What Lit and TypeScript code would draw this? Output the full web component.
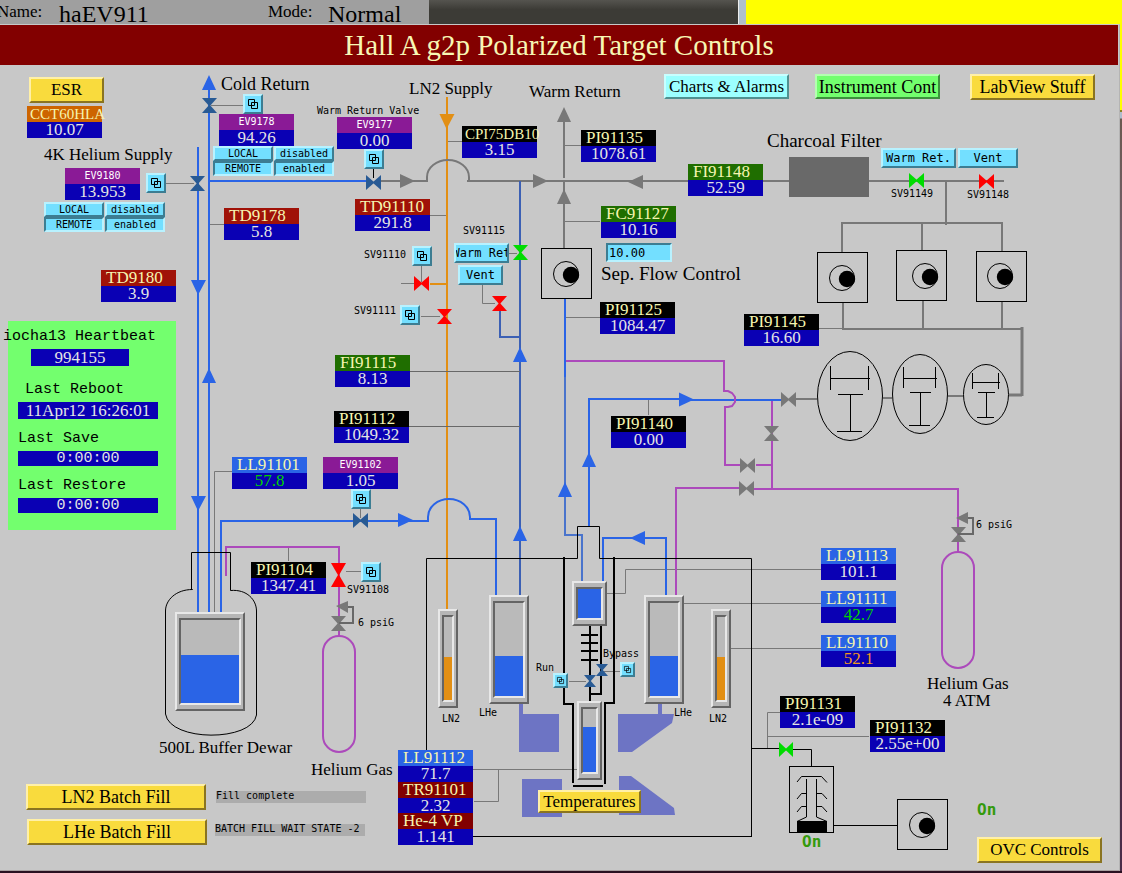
import { LitElement, html, svg, css } from "lit";
import { customElement, property } from "lit/decorators.js";
import { classMap } from "lit/directives/class-map.js";
import { styleMap } from "lit/directives/style-map.js";

const ORIGIN_Y = 65;
const at = (x: number, y: number, w?: number, h?: number) => {
  const s: Record<string, string> = { left: `${x}px`, top: `${y - ORIGIN_Y}px` };
  if (w) s.width = `${w}px`;
  if (h) s.height = `${h}px`;
  return styleMap(s);
};

type Kind = "pressure" | "flow" | "temp" | "valve" | "level" | "supply" | "deep";
interface Reading { x: number; y: number; kind: Kind; tag: string; value: string; tone?: string }

const READINGS: Reading[] = [
  { x: 27, y: 106, kind: "supply", tag: "CCT60HLA", value: "10.07" },
  { x: 65, y: 168, kind: "valve", tag: "EV9180", value: "13.953" },
  { x: 219, y: 114, kind: "valve", tag: "EV9178", value: "94.26" },
  { x: 337, y: 117, kind: "valve", tag: "EV9177", value: "0.00" },
  { x: 224, y: 208, kind: "temp", tag: "TD9178", value: "5.8" },
  { x: 101, y: 270, kind: "temp", tag: "TD9180", value: "3.9" },
  { x: 355, y: 199, kind: "temp", tag: "TD91110", value: "291.8" },
  { x: 462, y: 126, kind: "pressure", tag: "CPI75DB10", value: "3.15" },
  { x: 581, y: 130, kind: "pressure", tag: "PI91135", value: "1078.61" },
  { x: 688, y: 164, kind: "flow", tag: "FI91148", value: "52.59" },
  { x: 601, y: 206, kind: "flow", tag: "FC91127", value: "10.16" },
  { x: 600, y: 302, kind: "pressure", tag: "PI91125", value: "1084.47" },
  { x: 335, y: 355, kind: "flow", tag: "FI91115", value: "8.13" },
  { x: 334, y: 411, kind: "pressure", tag: "PI91112", value: "1049.32" },
  { x: 323, y: 457, kind: "valve", tag: "EV91102", value: "1.05" },
  { x: 232, y: 457, kind: "level", tag: "LL91101", value: "57.8", tone: "ok" },
  { x: 251, y: 562, kind: "pressure", tag: "PI91104", value: "1347.41" },
  { x: 611, y: 416, kind: "pressure", tag: "PI91140", value: "0.00" },
  { x: 744, y: 314, kind: "pressure", tag: "PI91145", value: "16.60" },
  { x: 821, y: 548, kind: "level", tag: "LL91113", value: "101.1" },
  { x: 821, y: 591, kind: "level", tag: "LL91111", value: "42.7", tone: "ok" },
  { x: 821, y: 635, kind: "level", tag: "LL91110", value: "52.1", tone: "warn" },
  { x: 780, y: 696, kind: "pressure", tag: "PI91131", value: "2.1e-09" },
  { x: 870, y: 720, kind: "pressure", tag: "PI91132", value: "2.55e+00" },
  { x: 398, y: 750, kind: "level", tag: "LL91112", value: "71.7" },
  { x: 398, y: 782, kind: "deep", tag: "TR91101", value: "2.32" },
  { x: 398, y: 813, kind: "deep", tag: "He-4 VP", value: "1.141" },
];

interface Caption { x: number; y: number; text: string; size: string }
const CAPTIONS: Caption[] = [
  { x: 221, y: 74, text: "Cold Return", size: "large" },
  { x: 409, y: 79, text: "LN2 Supply", size: "medium" },
  { x: 529, y: 82, text: "Warm Return", size: "medium" },
  { x: 44, y: 145, text: "4K Helium Supply", size: "medium" },
  { x: 767, y: 131, text: "Charcoal Filter", size: "wide" },
  { x: 601, y: 264, text: "Sep. Flow Control", size: "wide" },
  { x: 159, y: 738, text: "500L Buffer Dewar", size: "medium" },
  { x: 311, y: 760, text: "Helium Gas", size: "medium" },
  { x: 927, y: 674, text: "Helium Gas", size: "medium" },
  { x: 943, y: 691, text: "4 ATM", size: "medium" },
  { x: 317, y: 105, text: "Warm Return Valve", size: "small" },
  { x: 364, y: 249, text: "SV91110", size: "small" },
  { x: 354, y: 305, text: "SV91111", size: "small" },
  { x: 463, y: 225, text: "SV91115", size: "small" },
  { x: 891, y: 188, text: "SV91149", size: "small" },
  { x: 967, y: 189, text: "SV91148", size: "small" },
  { x: 347, y: 584, text: "SV91108", size: "small" },
  { x: 358, y: 617, text: "6 psiG", size: "small" },
  { x: 976, y: 519, text: "6 psiG", size: "small" },
  { x: 536, y: 662, text: "Run", size: "small" },
  { x: 603, y: 648, text: "Bypass", size: "small" },
  { x: 442, y: 713, text: "LN2", size: "small" },
  { x: 479, y: 707, text: "LHe", size: "small" },
  { x: 674, y: 707, text: "LHe", size: "small" },
  { x: 709, y: 713, text: "LN2", size: "small" },
  { x: 802, y: 832, text: "On", size: "state" },
  { x: 977, y: 800, text: "On", size: "state" },
];

const BUTTONS: [number, number, number, number, string, string][] = [
  [29, 77, 75, 26, "ESR", "gold snug"],
  [664, 74, 125, 25, "Charts & Alarms", "aqua"],
  [815, 74, 125, 25, "Instrument Cont", "lime"],
  [970, 74, 125, 26, "LabView Stuff", "gold"],
  [26, 784, 180, 26, "LN2 Batch Fill", "gold"],
  [27, 819, 180, 26, "LHe Batch Fill", "gold"],
  [977, 837, 125, 26, "OVC Controls", "gold snug"],
  [538, 790, 103, 23, "Temperatures", "gold snug"],
  [881, 148, 75, 20, "Warm Ret.", "sky"],
  [958, 148, 60, 20, "Vent", "sky"],
  [454, 243, 55, 20, "Warm Ret", "sky"],
  [458, 265, 45, 20, "Vent", "sky"],
];

const LINKS: [number, number, number, string][] = [
  [243, 94, 20, "EV9178"], [146, 173, 20, "EV9180"], [364, 149, 20, "EV9177"],
  [412, 246, 20, "SV91110"], [400, 305, 20, "SV91111"], [351, 489, 20, "EV91102"],
  [361, 562, 20, "SV91108"], [553, 673, 15, "Run"], [620, 662, 15, "Bypass"],
];

interface Tank { x: number; y: number; w: number; h: number; level: number; fluid: string; name: string }
const TANKS: Tank[] = [
  { x: 175, y: 612, w: 70, h: 99, level: 57.8, fluid: "helium", name: "500L buffer dewar" },
  { x: 438, y: 609, w: 20, h: 99, level: 52, fluid: "nitrogen", name: "LN2 left" },
  { x: 489, y: 595, w: 40, h: 109, level: 42.7, fluid: "helium", name: "LHe left" },
  { x: 644, y: 595, w: 40, h: 109, level: 42.7, fluid: "helium", name: "LHe right" },
  { x: 711, y: 609, w: 20, h: 99, level: 52.1, fluid: "nitrogen", name: "LN2 right" },
  { x: 572, y: 581, w: 35, h: 45, level: 100, fluid: "helium", name: "Separator" },
  { x: 577, y: 701, w: 25, h: 79, level: 71.7, fluid: "helium", name: "Nose" },
];

const BLUE = "#2a64e6";
const GRAY = "#787878";
const RED = "#ff0000";
const GREEN = "#00dc00";
const STEEL = "#285a94";
const VIOLET = "#ac4abb";
const ORANGE = "#e28f14";

/* Flow direction heads: the point is the tip of the arrow. */
const arrow = (x: number, y: number, dir: "u" | "d" | "l" | "r", color: string) => {
  const p = {
    u: `${x},${y} ${x + 7},${y + 15} ${x - 7},${y + 15}`,
    d: `${x},${y} ${x + 8},${y - 15} ${x - 7},${y - 15}`,
    l: `${x},${y} ${x + 15},${y - 7} ${x + 15},${y + 7}`,
    r: `${x},${y} ${x - 15},${y - 7} ${x - 15},${y + 7}`,
  }[dir];
  return svg`<polygon points=${p} fill=${color}></polygon>`;
};

/* Bow-tie valve with its top left corner at x, y. */
const valve = (x: number, y: number, upright: boolean, color: string, w = 15, h = 15) => {
  const cx = x + w / 2;
  const cy = y + h / 2;
  const first = upright ? `${x},${y} ${x + w},${y} ${cx},${cy + 1}` : `${x},${y} ${cx + 1},${cy} ${x},${y + h}`;
  const second = upright
    ? `${x},${y + h} ${x + w},${y + h} ${cx},${cy - 1}`
    : `${x + w},${y} ${cx - 1},${cy} ${x + w},${y + h}`;
  return svg`<polygon points=${first} fill=${color}></polygon><polygon points=${second} fill=${color}></polygon>`;
};

const pipe = (d: string, color: string, width = 2) =>
  svg`<path d=${d} stroke=${color} stroke-width=${width} fill="none"></path>`;

const pump = (x: number, y: number, cx: number, cy: number) => svg`
  <rect x=${x + 0.5} y=${y + 0.5} width="50" height="50" fill="none" stroke="#000"></rect>
  <circle cx=${cx} cy=${cy} r="12.5" fill="none" stroke="#000"></circle>
  <circle cx=${cx + 5} cy=${cy + 1} r="8.2" fill="#000"></circle>`;

const blower = (cx: number, cy: number, rx: number, ry: number, l: number[], t: number[]) => svg`
  <ellipse cx=${cx} cy=${cy} rx=${rx} ry=${ry} fill="none" stroke="#000"></ellipse>
  <path fill="none" stroke="#000"
    d=${`M${l[0]} ${l[2]}V${l[3]}M${l[1]} ${l[2]}V${l[3]}M${l[0]} ${l[4]}H${l[1] + 1.5}M${t[0]} ${t[2]}H${t[1]}M${t[0] - 1} ${t[3]}H${t[1] - 1}M${Math.floor(cx) + 0.5} ${t[2]}V${t[3]}`}></path>`;

@customElement("tag-reading")
class TagReading extends LitElement {
  @property() tag = "";
  @property() value = "";
  @property() kind: Kind = "pressure";
  @property() tone = "";

  static styles = css`
    :host { display: block; width: 75px; font: 17px/16px "Liberation Serif", serif; white-space: nowrap; }
    .tag { height: 16px; padding-left: 5px; color: #f5f5b0; }
    .long { font-size: 15px; padding-left: 3px; }
    .value { height: 16px; text-align: center; background: #0a00b4; color: #e4e4e4; }
    .pressure { background: #000; }
    .flow { background: #1f6e00; }
    .temp { background: #a01208; }
    .deep { background: #820000; }
    .level { background: #2a64e6; }
    .supply { background: #cd6400; }
    .valve { background: #8a1a96; color: #fff; font: 10px/15px "DejaVu Sans Mono", monospace; padding: 0; text-align: center; }
    .ok { color: #00d200; }
    .warn { color: #ee9a20; }
  `;

  render() {
    return html`
      <div class=${classMap({ tag: true, [this.kind]: true, long: this.tag.length > 7 })}>${this.tag}</div>
      <div class=${this.tone ? `value ${this.tone}` : "value"}>${this.value}</div>`;
  }
}

@customElement("level-tank")
class LevelTank extends LitElement {
  @property({ type: Number }) level = 0;
  @property() fluid = "helium";
  @property() name = "";

  static styles = css`
    :host { display: block; }
    .shell { box-sizing: border-box; height: 100%; padding: 4px 2px; background: #b6b6b6; border: 2px solid; border-color: #e8e8e8 #646464 #646464 #e8e8e8; }
    .well { box-sizing: border-box; height: 100%; display: flex; align-items: flex-end; background: #bababa; border: 2px solid; border-color: #646464 #e8e8e8 #e8e8e8 #646464; }
    .fill { width: 100%; }
    .helium { background: #2a64e6; }
    .nitrogen { background: #e28f14; }
  `;

  render() {
    return html`<div class="shell" role="meter" aria-label=${this.name} aria-valuenow=${this.level} aria-valuemin="0" aria-valuemax="100">
      <div class="well"><div class="fill ${this.fluid}" style=${styleMap({ height: `${this.level}%` })}></div></div>
    </div>`;
  }
}

@customElement("mode-switch")
class ModeSwitch extends LitElement {
  static styles = css`
    :host { display: grid; grid-template-columns: 60px 60px; column-gap: 1px; }
    button { height: 15px; margin: 0; padding: 0; border: 2px solid; border-color: #b8f2ff #3c7d92 #3c7d92 #b8f2ff; background: #73dfff; color: #000; font: 10px/11px "DejaVu Sans Mono", monospace; }
    .lower { border-color: #3c7d92 #b8f2ff #b8f2ff #3c7d92; }
  `;

  render() {
    return html`<button>LOCAL</button><button>disabled</button><button class="lower">REMOTE</button><button class="lower">enabled</button>`;
  }
}

@customElement("heartbeat-panel")
class HeartbeatPanel extends LitElement {
  static styles = css`
    :host { display: flex; flex-direction: column; box-sizing: border-box; width: 168px; padding: 8px 18px 17px 10px; background: #73ff6e; font: 15px/16px "Liberation Mono", monospace; color: #000; white-space: nowrap; }
    .group { display: flex; flex-direction: column; gap: 4px; }
    .first { margin-bottom: 16px; }
    .next { margin-bottom: 12px; }
    .out { margin-left: -15px; }
    .in { margin-left: 7px; }
    .field { background: #0a00b4; color: #e4e4e4; text-align: center; }
    .serif { font: 17px/17px "Liberation Serif", serif; }
    .short { width: 98px; align-self: flex-start; margin-left: 13px; }
    .mono { line-height: 15px; }
  `;

  render() {
    return html`
      <div class="group first"><span class="out">iocha13 Heartbeat</span><span class="field serif short">994155</span></div>
      <div class="group next"><span class="in">Last Reboot</span><span class="field serif">11Apr12 16:26:01</span></div>
      <div class="group next"><span>Last Save</span><span class="field mono">0:00:00</span></div>
      <div class="group"><span>Last Restore</span><span class="field mono">0:00:00</span></div>`;
  }
}

@customElement("app-root")
class AppRoot extends LitElement {
  static styles = css`
    :host { display: block; color: #000; font: 17px/20px "Liberation Serif", serif; background: #3a1c30; overflow: hidden; }
    .strip { display: flex; height: 24px; background: #ffff00; }
    .status { display: flex; width: 429px; background: #9f9f9f; white-space: nowrap; line-height: 24px; }
    .field-name { margin-left: -3px; width: 62px; }
    .field-value { width: 209px; font-size: 24px; line-height: 29px; }
    .mode-name { width: 60px; }
    .mode-value { font-size: 24px; line-height: 29px; }
    .shade { width: 309px; background: linear-gradient(#55544f, #3c3b36 40%, #3c3b36); }
    .edge { width: 7px; background: #b0c0cc; border-left: 1px solid #eee; }
    .window { position: relative; display: grid; grid-template-columns: minmax(0, 1fr) 2px; }
    .side { background: linear-gradient(#ffff00 86px, #8a8420 86px, #8a8420 88px, #aebccb 88px, #aebccb 94px, #6b5a50 95px, #75607c 300px, #5a2c3c 420px, #4a2c48 800px); }
    .sheet { background: #c8c8c8; border-top: 1px solid #c8c8c8; border-bottom: 1px solid #a8a0a0; border-right: 1px solid #b4b4b4; }
    h1 { margin: 0 1px 0 0; height: 40px; background: #820000; color: #f7f7b4; font: 29px/40px "Liberation Serif", serif; text-align: center; white-space: nowrap; }
    .floor { height: 2px; background: #2a1020; }
    .canvas { position: relative; }
    .pipes { display: block; width: 1119px; height: 805px; }
    .node { position: absolute; }
    .caption { white-space: nowrap; }
    .wide { font-size: 19px; }
    .large { font-size: 18px; }
    .medium { font-size: 17px; }
    .small { font: 10px/12px "DejaVu Sans Mono", monospace; }
    .state { font: bold 16px/20px "DejaVu Sans Mono", monospace; color: #349a0c; }
    button { margin: 0; padding: 0; overflow: hidden; white-space: nowrap; color: #000; border: 2px solid; display: flex; align-items: center; justify-content: center; font: 18px/20px "Liberation Serif", serif; }
    .gold { background: #f9db3d; border-color: #fff0a8 #8a7420 #8a7420 #fff0a8; }
    .snug { font-size: 17px; }
    .aqua { background: #9cffff; border-color: #c8ffff #509090 #509090 #c8ffff; font-size: 17px; }
    .lime { background: #73ff6e; border-color: #b4ffb0 #3c903c #3c903c #b4ffb0; }
    .sky { background: #73dfff; border-color: #b8f2ff #3c7d92 #3c7d92 #b8f2ff; font: 12px/16px "DejaVu Sans Mono", monospace; }
    .glyph { width: 100%; height: 100%; display: block; }
    .entry { box-sizing: border-box; margin: 0; padding: 0 1px; border: 2px solid; border-color: #3c7d92 #b8f2ff #b8f2ff #3c7d92; background: #73dfff; color: #000; font: 12px/15px "DejaVu Sans Mono", monospace; border-radius: 0; }
    .message { height: 12px; background: #acacac; font: 10px/10px "DejaVu Sans Mono", monospace; white-space: nowrap; }
  `;

  private diagram() {
    return svg`
      <polygon points="519,704 523,704 523,714 559,714 559,752 519,752" fill="#6d74c4"></polygon>
      <polygon points="618,714 658,714 658,704 662,704 662,714 674,714 672,723 632,752 618,752" fill="#6d74c4"></polygon>
      <rect x="522" y="779" width="40" height="38" fill="#6d74c4"></rect>
      <polygon points="619,776 631,776 674,808 675,815 619,815" fill="#6d74c4"></polygon>

      ${pipe("M166 183.5H194M211 105.5H243M209 224.5H224M446 141.5H462M430 215.5H446M565 145.5H581M565 221.5H600M401 283.5H414M421.5 266V282M421 316.5H440M509 253.5H517M482.5 285V303.5H495M566 317.5H600M648.5 400V415M819 328.5H843M232 471.5H214.5V612M288.5 547V561M346 571.5H361M360.5 509V518M821 569.5H625.5V593.5H607M684 603.5H828M731 648.5H822M569 681.5H586M602 671.5H620M473 769.5H577M498.5 769V801.5H474M780 712.5H767.5V748M767 736.5H869", GRAY, 1)}
      ${pipe("M373.5 169V178", "#000", 1)}

      ${pipe("M447 97V609M430 284H447", ORANGE)}
      ${arrow(446.5, 129, "d", ORANGE)}
      ${pipe("M381 181H427V177A21 17 0 0 1 469 177V181H467M467 181H789M869 181H1004M564 122V178M564 182V248M946 182V225M842 252V223H1002V251M922 223V250M843 302V329H1022M923 300V329M1002 301V329M796 399H817M883 398H892M948 396H963", GRAY)}
      ${pipe("M1009 395H1022M1022 327V396", GRAY, 3)}
      ${pipe("M520 181V595M500 311V337H520", "#3c60b4")}
      ${pipe("M198 147V612M209 85V612M209 181H367M221 612V521H428V517A21 18 0 0 1 470 517V519H496V595M565 299V377M589 526V399H680M690 400H781M603 581V538H666V595", BLUE)}
      ${pipe("M565 377V535H582V581", "#4a74cc")}
      ${pipe("M566 361H724V391H728L732 393L735 397V402L732 406L728 407H725V465H741M772 401V489M756 465H772M676 595V488H741M753 489H958V552M226 576V547H339V636", VIOLET)}
      ${pipe("M410 371.5H520M409 426.5H520", "#686868", 1)}
      <rect x="323" y="636" width="32" height="116" rx="16" fill="none" stroke=${VIOLET} stroke-width="2"></rect>
      <rect x="942" y="552" width="32" height="116" rx="16" fill="none" stroke=${VIOLET} stroke-width="2"></rect>

      ${arrow(209, 75, "u", BLUE)}${arrow(209, 368, "u", BLUE)}
      ${arrow(198, 295, "d", BLUE)}${arrow(198, 511, "d", BLUE)}
      ${arrow(520, 347, "u", BLUE)}${arrow(520, 526, "u", BLUE)}
      ${arrow(565, 482, "u", BLUE)}${arrow(589, 452, "u", BLUE)}
      ${arrow(694, 399.5, "r", BLUE)}${arrow(413, 520, "r", BLUE)}${arrow(630, 538, "l", BLUE)}
      ${arrow(415, 181, "r", GRAY)}${arrow(548, 181, "r", GRAY)}${arrow(628, 182, "l", GRAY)}
      ${arrow(564, 107, "u", GRAY)}${arrow(564, 189, "u", GRAY)}

      ${valve(202, 98, true, STEEL)}${valve(190, 176, true, STEEL)}${valve(366, 175, false, STEEL)}
      ${valve(353, 513, false, STEEL)}
      ${valve(414, 276, false, RED)}${valve(437, 309, true, RED)}${valve(492, 296, true, RED)}
      ${valve(513, 245, true, GREEN)}${valve(909, 173, false, GREEN)}${valve(979, 174, false, RED)}
      ${valve(331, 563, true, RED, 15, 24)}${valve(779, 742, false, GREEN, 14)}
      ${valve(781, 392, false, GRAY)}${valve(764, 426, true, GRAY)}
      ${valve(740, 458, false, GRAY)}${valve(739, 481, false, GRAY)}
      ${valve(331, 616, true, GRAY)}${valve(951, 527, true, GRAY)}

      ${pipe("M347 607H353V623H339M967 518H973V534H958", "#686868")}
      <polygon points="336,606 348,601 348,613" fill=${GRAY}></polygon>
      <polygon points="956,518 968,512 968,524" fill=${GRAY}></polygon>

      ${pump(541, 248, 566, 274)}${pump(817, 252, 842, 278)}${pump(896, 250, 925, 276)}
      ${pump(976, 251, 1000, 276)}${pump(897, 799, 922, 825)}
      ${blower(850, 396, 32.5, 44.5, [830.5, 868.5, 366, 390, 378.5], [838, 863, 394.5, 431.5])}
      ${blower(920, 394, 27.5, 39.5, [903.5, 935.5, 367, 388, 378.5], [910, 931, 392.5, 425.5])}
      ${blower(986, 394.5, 22.5, 30, [972.5, 998.5, 373, 389, 382.5], [978, 995, 392.5, 417.5])}
      <rect x="789" y="157" width="80" height="40" fill="#696969"></rect>

      ${pipe("M192.5 589.5H191.5V552.5H230.5V590.5C247 589 256.5 600 256.5 611V715C252 742 170 742 165.5 714V611C165.5 600 176 589.5 192.5 589.5", "#000", 1)}
      ${pipe("M426.5 750V558.5H577.5V526.5H599.5V558.5H751.5V837M473 836.5H752M752 748.5H779M793 749.5H811.5V766M834 825.5H897", "#000", 1)}
      ${pipe("M564 557V704H573V783M614 557V703H605V784M573 786H603M590 626V701M601 626V694H590M581 635H598M581 643H598M581 651H598M581 660H598", "#000")}
      ${valve(584, 675, true, STEEL, 12, 12)}${valve(596, 664, true, STEEL, 12, 12)}

      <rect x="789.5" y="766.5" width="44" height="66" fill="none" stroke="#000"></rect>
      <rect x="797" y="821" width="30" height="12" fill="#000"></rect>
      ${pipe("M797 782L801.5 776.5H821.5L827 782.5M806.5 779V817L797 821.5M816.5 779V817L827 821.5M797 799L801.5 793.5H806M817 793.5H822L827 799M797 812L801.5 806.5H806M817 806.5H822L827 812", "#000", 1)}`;
  }

  render() {
    return html`
      <header class="strip">
        <div class="status">
          <span class="field-name">Name:</span><span class="field-value">haEV911</span>
          <span class="mode-name">Mode:</span><span class="mode-value">Normal</span>
        </div>
        <div class="shade"></div>
        <div class="edge"></div>
      </header>
      <div class="window">
        <main class="sheet">
          <h1>Hall A g2p Polarized Target Controls</h1>
          <div class="canvas">
            <svg class="pipes" viewBox="0 65 1119 805" aria-hidden="true">${this.diagram()}</svg>
            <heartbeat-panel class="node" style=${at(8, 321)}></heartbeat-panel>
            ${TANKS.map((t) => html`<level-tank class="node" style=${at(t.x, t.y, t.w, t.h)} .level=${t.level} .fluid=${t.fluid} .name=${t.name}></level-tank>`)}
            ${READINGS.map((r) => html`<tag-reading class="node" style=${at(r.x, r.y)} .tag=${r.tag} .value=${r.value} .kind=${r.kind} .tone=${r.tone ?? ""}></tag-reading>`)}
            ${CAPTIONS.map((c) => html`<span class="node caption ${c.size}" style=${at(c.x, c.y)}>${c.text}</span>`)}
            <mode-switch class="node" style=${at(213, 146)}></mode-switch>
            <mode-switch class="node" style=${at(44, 202)}></mode-switch>
            ${BUTTONS.map(([x, y, w, h, text, look]) => html`<button class="node ${look}" style=${at(x, y, w, h)}>${text}</button>`)}
            ${LINKS.map(([x, y, s, name]) => html`<button class="node sky" aria-label=${name} style=${at(x, y, s, s)}>
              <svg class="glyph" viewBox="2 2 16 16"><path d="M5.5 5.5h6v6h-6zM8.5 8.5h6v6h-6z" fill="none" stroke="#000" stroke-width="1"></path></svg>
            </button>`)}
            <input class="node entry" aria-label="Sep. Flow Control" value="10.00" style=${at(606, 243, 66, 19)} />
            <div class="node message" style=${at(216, 791, 150)}>Fill complete</div>
            <div class="node message" style=${at(215, 824, 150)}>BATCH FILL WAIT STATE -2</div>
          </div>
        </main>
        <div class="side"></div>
      </div>
      <div class="floor"></div>`;
  }
}
